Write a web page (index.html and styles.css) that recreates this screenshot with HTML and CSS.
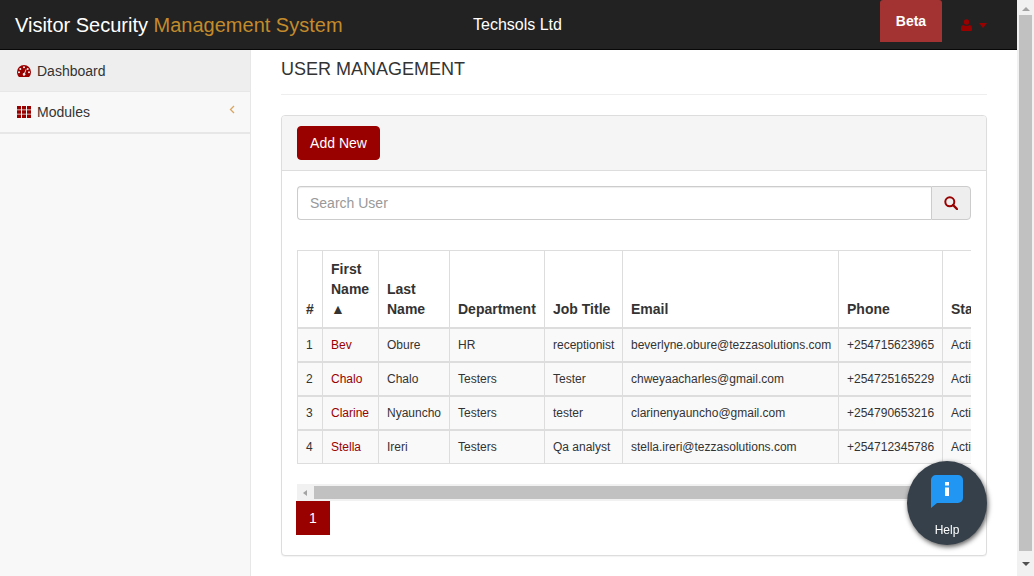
FILE: index.html
```html
<!DOCTYPE html>
<html lang="en">
<head>
<meta charset="utf-8">
<title>User Management</title>
<link rel="stylesheet" href="styles.css">
</head>
<body>
<div class="shell">
  <div class="page">
    <nav class="navbar">
      <div class="brand">Visitor Security <span class="brand-accent">Management System</span></div>
      <div class="company">Techsols Ltd</div>
      <div class="beta">Beta</div>
      <div class="user">
        <svg class="user-icon" viewBox="0 0 12 13"><circle cx="6" cy="3.2" r="3"/><path d="M1 13a1 1 0 0 1-1-1V9.5C0 7.5 1.2 6.4 2.8 6.4 3.6 7 4.7 7.4 6 7.4s2.4-.4 3.2-1c1.6 0 2.8 1.1 2.8 3.1V12a1 1 0 0 1-1 1z"/></svg>
        <span class="caret"></span>
      </div>
    </nav>
    <div class="layout">
      <aside class="sidebar">
        <a class="side-item side-active">
          <svg class="side-icon" viewBox="0 0 14 12"><path fill-rule="evenodd" d="M7 0a7 7 0 0 0-7 7c0 1.800.6 3.400 1.700 4.700.2.200.4.300.7.300h9.200c.3 0 .5-.1.700-.3A7 7 0 0 0 14 7a7 7 0 0 0-7-7zM7 1.300a1 1 0 1 1 0 2 1 1 0 0 1 0-2zM3.300 2.900a1 1 0 1 1 0 2 1 1 0 0 1 0-2zM10.700 2.900a1 1 0 1 1 0 2 1 1 0 0 1 0-2zM2 6.300a1 1 0 1 1 0 2 1 1 0 0 1 0-2zM12 6.300a1 1 0 1 1 0 2 1 1 0 0 1 0-2zM8.800 4.300l.7.300L8 8.400a1.300 1.300 0 1 1-.8-.4z"/></svg>
          <span>Dashboard</span>
        </a>
        <a class="side-item">
          <svg class="side-icon" viewBox="0 0 14 12"><path d="M0 0h4v3.400H0zM5 0h4v3.400H5zM10 0h4v3.400h-4zM0 4.300h4v3.400H0zM5 4.300h4v3.400H5zM10 4.300h4v3.400h-4zM0 8.600h4V12H0zM5 8.600h4V12H5zM10 8.600h4V12h-4z"/></svg>
          <span>Modules</span>
          <svg class="chevron" viewBox="0 0 6 9"><path d="M5 1 1.500 4.500 5 8" fill="none" stroke-width="1.300"/></svg>
        </a>
      </aside>
      <main class="content">
        <h1 class="title">USER MANAGEMENT</h1>
        <section class="panel">
          <div class="panel-head"><button class="btn-add">Add New</button></div>
          <div class="panel-body">
            <div class="search">
              <input class="search-input" placeholder="Search User">
              <span class="search-btn">
                <svg class="search-icon" viewBox="0 0 14 14"><circle cx="5.800" cy="5.800" r="4.500" fill="none" stroke-width="2"/><path d="M9 9l4 4" fill="none" stroke-width="2.400" stroke-linecap="round"/></svg>
              </span>
            </div>
            <div class="table-wrap">
              <table class="users">
                <colgroup>
                  <col class="c-num"><col class="c-first"><col class="c-last"><col class="c-dept"><col class="c-job"><col class="c-email"><col class="c-phone"><col class="c-status">
                </colgroup>
                <thead>
                  <tr><th>#</th><th>First Name ▲</th><th>Last Name</th><th>Department</th><th>Job Title</th><th>Email</th><th>Phone</th><th>Status</th></tr>
                </thead>
                <tbody>
                  <tr><td>1</td><td><a class="name-link">Bev</a></td><td>Obure</td><td>HR</td><td>receptionist</td><td>beverlyne.obure@tezzasolutions.com</td><td>+254715623965</td><td>Active</td></tr>
                  <tr><td>2</td><td><a class="name-link">Chalo</a></td><td>Chalo</td><td>Testers</td><td>Tester</td><td>chweyaacharles@gmail.com</td><td>+254725165229</td><td>Active</td></tr>
                  <tr><td>3</td><td><a class="name-link">Clarine</a></td><td>Nyauncho</td><td>Testers</td><td>tester</td><td>clarinenyauncho@gmail.com</td><td>+254790653216</td><td>Active</td></tr>
                  <tr><td>4</td><td><a class="name-link">Stella</a></td><td>Ireri</td><td>Testers</td><td>Qa analyst</td><td>stella.ireri@tezzasolutions.com</td><td>+254712345786</td><td>Active</td></tr>
                </tbody>
              </table>
            </div>
            <div class="hscroll">
              <span class="hscroll-arrow"></span>
              <span class="hscroll-thumb"></span>
            </div>
            <div class="pager"><span class="page-current">1</span></div>
          </div>
        </section>
      </main>
    </div>
  </div>
  <div class="vscroll">
    <span class="arrow-up"></span>
    <span class="vscroll-thumb"></span>
    <span class="arrow-down"></span>
  </div>
</div>
<div class="help">
  <svg class="help-icon" viewBox="0 0 32 33"><path d="M5 0h22a5 5 0 0 1 5 5v18a5 5 0 0 1-5 5H6L0 33V5a5 5 0 0 1 5-5z" fill="#2196f3"/><rect x="14" y="7" width="4" height="3.500" fill="#fff"/><rect x="14" y="12.500" width="4" height="8.500" fill="#fff"/></svg>
  <span class="help-label">Help</span>
</div>
</body>
</html>
```
FILE: styles.css
```css
* { box-sizing: border-box; }
html, body { margin: 0; height: 100%; overflow: hidden; }
body { font-family: "Liberation Sans", Arial, sans-serif; font-size: 14px; line-height: 20px; color: #333; background: #fff; }

.shell { display: flex; height: 576px; }
.page { flex: 1; min-width: 0; display: flex; flex-direction: column; }

.navbar { height: 50px; flex: none; display: flex; background: #222; border-bottom: 1px solid #080808; color: #fff; }
.brand { margin-left: 15px; width: 458px; font-size: 20px; line-height: 50px; white-space: nowrap; }
.brand-accent { color: #c38b2b; }
.company { width: 407px; font-size: 16px; line-height: 50px; }
.beta { width: 62px; height: 42px; background: #a33333; border-radius: 3px 3px 0 0; font-weight: 700; font-size: 14px; line-height: 42px; text-align: center; }
.user { margin-left: 19px; display: flex; align-items: center; gap: 7px; height: 50px; }
.user-icon { width: 11px; height: 12px; fill: #900; }
.caret { width: 0; height: 0; border-left: 4.500px solid transparent; border-right: 4.500px solid transparent; border-top: 5px solid #900; }

.layout { flex: 1; display: flex; min-height: 0; }
.sidebar { width: 251px; flex: none; background: #f8f8f8; border-right: 1px solid #e7e7e7; }
.side-item { display: flex; align-items: center; height: 42px; padding-left: 17px; border-bottom: 2px solid #e7e7e7; color: #333; gap: 6px; }
.side-active { background: #eee; height: 42px; border-bottom-width: 1px; }
.side-icon { width: 14px; height: 12px; fill: #900; }
.chevron { width: 6px; height: 9px; margin-left: 133px; margin-top: -5px; stroke: #d9a560; }

.content { flex: 1; min-width: 0; padding: 0 30px; }
.title { margin: 0 0 20px; padding: 9px 0 14px; height: 45px; font-size: 18px; line-height: 20px; font-weight: 500; color: #333; border-bottom: 1px solid #eee; }

.panel { width: 706px; height: 441px; background: #fff; border: 1px solid #ddd; border-radius: 4px; box-shadow: 0 1px 1px rgba(0,0,0,.05); }
.panel-head { height: 55px; padding: 10px 15px; background: #f5f5f5; border-bottom: 1px solid #ddd; border-radius: 3px 3px 0 0; }
.btn-add { display: block; width: 83px; height: 34px; padding: 0; background: #900; color: #fff; border: 1px solid #900; border-radius: 4px; font: 14px/20px "Liberation Sans", Arial, sans-serif; }
.panel-body { padding: 15px 15px 0; }

.search { display: flex; height: 34px; }
.search-input { flex: 1; min-width: 0; padding: 6px 12px; border: 1px solid #ccc; border-right: 0; border-radius: 4px 0 0 4px; font: 14px/20px "Liberation Sans", Arial, sans-serif; color: #555; box-shadow: inset 0 1px 1px rgba(0,0,0,.075); background: #fff; }
.search-input::placeholder { color: #999; opacity: 1; }
.search-btn { width: 40px; display: flex; align-items: center; justify-content: center; background: #eee; border: 1px solid #ccc; border-radius: 0 4px 4px 0; }
.search-icon { width: 14px; height: 14px; stroke: #900; }

.table-wrap { margin-top: 30px; overflow: hidden; width: 674px; }
.users { table-layout: fixed; width: 725px; border-collapse: collapse; font-size: 12px; line-height: 16px; }
.c-num { width: 25px; } .c-first { width: 56px; } .c-last { width: 71px; } .c-dept { width: 95px; }
.c-job { width: 78px; } .c-email { width: 216px; } .c-phone { width: 104px; } .c-status { width: 80px; }
.users th, .users td { border: 1px solid #ddd; padding: 8px; text-align: left; }
.users th { font-size: 14px; line-height: 20px; font-weight: 700; vertical-align: bottom; border-bottom-width: 2px; }
.users td { vertical-align: middle; white-space: nowrap; border-bottom-width: 2px; }
.users tbody tr:last-child td { border-bottom-width: 1px; }
.users tbody tr { background: #f9f9f9; }
.name-link { color: #900; }

.hscroll { margin-top: 20px; height: 17px; width: 674px; display: flex; align-items: center; background: #f1f1f1; }
.hscroll-arrow { width: 0; height: 0; margin-left: 6px; margin-right: 7px; border-top: 3.500px solid transparent; border-bottom: 3.500px solid transparent; border-right: 4px solid #a3a3a3; }
.hscroll-thumb { flex: 1; height: 13px; background: #c1c1c1; margin-right: 60px; }

.pager { margin-left: -1px; }
.page-current { display: block; width: 34px; height: 34px; background: #900; color: #fff; font-size: 14px; line-height: 34px; text-align: center; }

.vscroll { width: 17px; flex: none; display: flex; flex-direction: column; align-items: center; background: #f1f1f1; }
.arrow-up { width: 0; height: 0; margin: 7px 0 4px; border-left: 4px solid transparent; border-right: 4px solid transparent; border-bottom: 4px solid #a3a3a3; }
.vscroll-thumb { flex: 1; width: 13px; background: #c1c1c1; }
.arrow-down { width: 0; height: 0; margin: 11px 0 10px; border-left: 4px solid transparent; border-right: 4px solid transparent; border-top: 4px solid #505050; }

.help { position: fixed; left: 907px; top: 461px; width: 80px; height: 84px; border-radius: 50%; background: #36404a; box-shadow: 1px 2px 5px rgba(0,0,0,.65); display: flex; flex-direction: column; align-items: center; color: #fff; }
.help-icon { width: 32px; height: 33px; margin-top: 14px; }
.help-label { font-size: 12px; line-height: 16px; margin-top: 14px; }
```
